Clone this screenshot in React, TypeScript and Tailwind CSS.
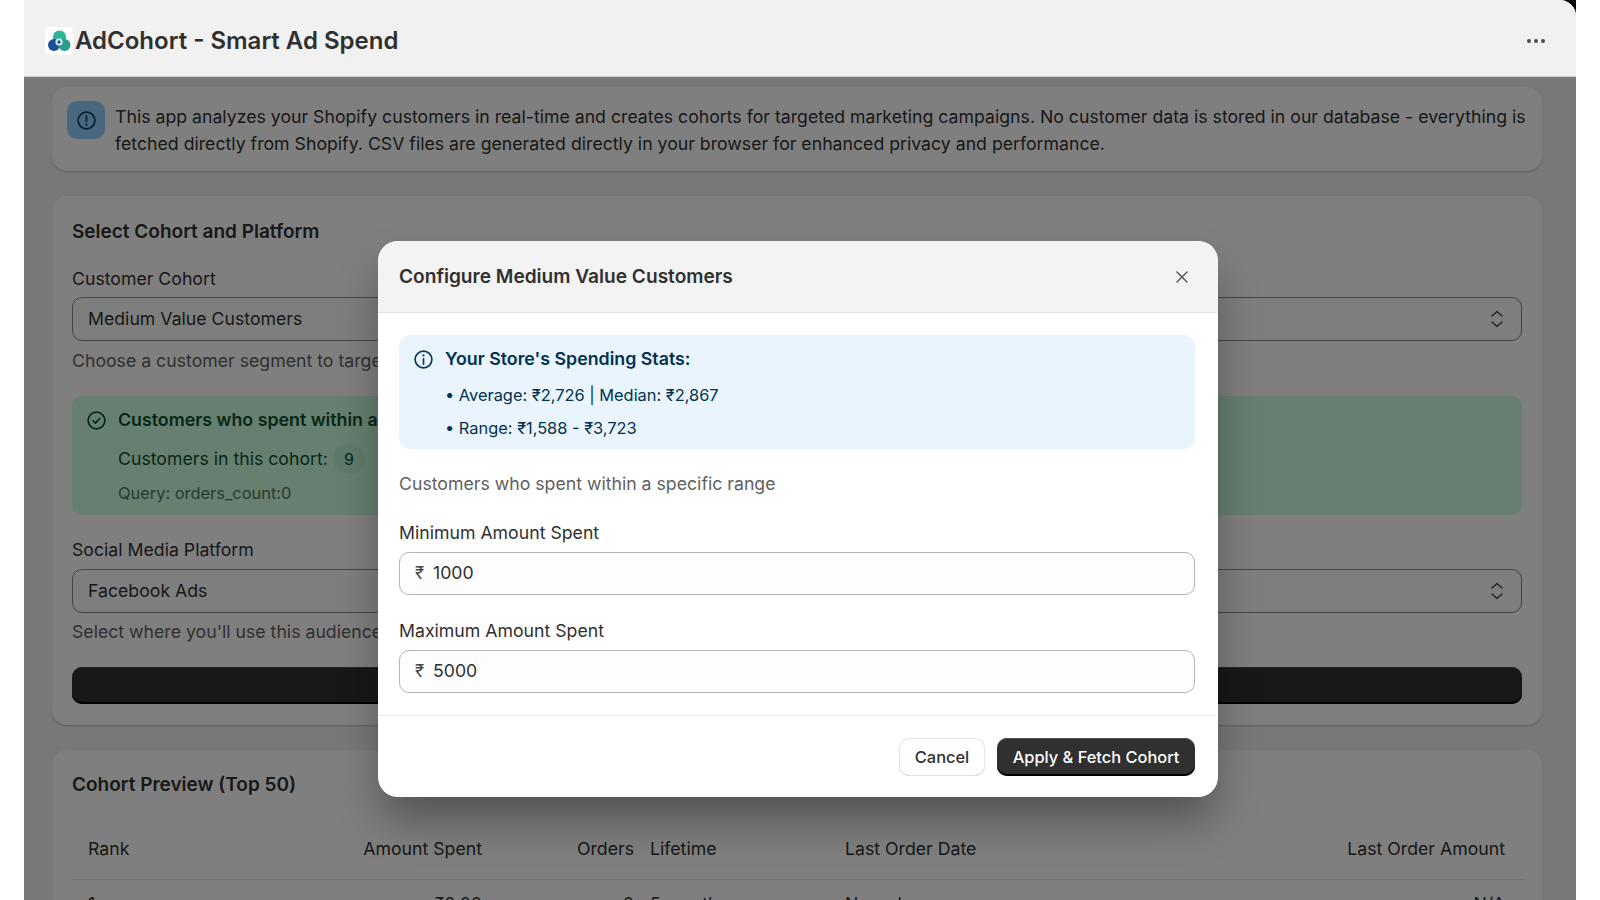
import { X } from 'lucide-react';

const font = "font-['Inter',sans-serif]";

function ChevronSelector() {
  return (
    <svg width="20" height="20" viewBox="0 0 20 20" fill="none" stroke="#4a4a4a" strokeWidth="1.5" strokeLinecap="round" strokeLinejoin="round">
      <path d="M5 7 10 2.5 15 7" />
      <path d="M5 13 10 17.5 15 13" />
    </svg>
  );
}

function InfoCircle({ size = 21, color = '#003a5a', flip = false }: { size?: number; color?: string; flip?: boolean }) {
  return (
    <svg width={size} height={size} viewBox="0 0 20 20" fill="none" stroke={color} strokeWidth="1.6" strokeLinecap="round">
      <circle cx="10" cy="10" r="8" />
      {flip ? (
        <>
          <path d="M10 5.6v5.4" />
          <path d="M10 14v.1" strokeWidth="2" />
        </>
      ) : (
        <>
          <path d="M10 9.4v5" />
          <path d="M10 6v.1" strokeWidth="2" />
        </>
      )}
    </svg>
  );
}

function Logo() {
  return (
    <div className="flex h-[28px] w-[28px] items-center justify-center rounded-[4px] bg-white">
      <svg width="24" height="24" viewBox="0 0 24 24">
        <circle cx="12.5" cy="8" r="6.6" fill="#2fb59a" />
        <circle cx="7" cy="16" r="6" fill="#1d4f9c" />
        <circle cx="17.5" cy="16" r="6" fill="#2a9c8c" />
        <circle cx="12" cy="13" r="3.6" fill="#d9f0f0" />
        <circle cx="12" cy="13" r="1.7" fill="#1d4f9c" />
      </svg>
    </div>
  );
}

function SelectBox({ value }: { value: string }) {
  return (
    <div className="flex h-[44px] items-center justify-between rounded-[10px] border border-[#8a8a8a] bg-[#fdfdfd] pl-[15px] pr-[14px] text-[17.7px] text-[#303030]">
      <span>{value}</span>
      <ChevronSelector />
    </div>
  );
}

function AmountField({ label, value }: { label: string; value: string }) {
  return (
    <div>
      <div className="mb-[7px] text-[17.7px] leading-[24px] text-[#303030]">{label}</div>
      <div className="flex h-[43px] items-center rounded-[10px] border border-[#b5b5b5] bg-[#fdfdfd] pl-[15px] text-[17.7px] text-[#303030]">
        <span className="w-[18px] text-[17px] text-[#4a4a4a]">₹</span>
        <span>{value}</span>
      </div>
    </div>
  );
}

export default function App() {
  return (
    <div className={`h-[900px] w-[1600px] overflow-hidden bg-white ${font}`}>
      <div className="ml-[24px] h-[900px] w-[1552px] overflow-hidden bg-black">
        <div className="relative h-full overflow-hidden rounded-tr-[16px] bg-[#f1f1f1]">
          {/* title bar sits above the backdrop */}
          <div className="relative z-20 flex h-[77px] items-center justify-between border-b border-[#c9c9c9] bg-[#f1f1f1] pl-[21px] pr-[31px] pt-[6px]">
            <div className="flex items-center gap-[2px]">
              <Logo />
              <span className="text-[24px] font-semibold text-[#303030]">AdCohort - Smart Ad Spend</span>
            </div>
            <div className="flex gap-[3px]">
              <span className="h-[4px] w-[4px] rounded-full bg-[#4a4a4a]" />
              <span className="h-[4px] w-[4px] rounded-full bg-[#4a4a4a]" />
              <span className="h-[4px] w-[4px] rounded-full bg-[#4a4a4a]" />
            </div>
          </div>

          {/* page behind the modal */}
          <div className="flex flex-col pl-[27px] pr-[33px] pt-[9px] text-[#303030]">
            <div className="flex gap-[10px] rounded-[16px] bg-white pb-[15px] pl-[16px] pr-[15px] pt-[17px] shadow-[0_1px_0_0_rgba(26,26,26,0.07),inset_0_-1px_0_0_#c8c8c8,inset_0_0_0_1px_rgba(0,0,0,0.08)]">
              <div className="-mt-[2px] flex h-[38px] w-[38px] shrink-0 items-center justify-center rounded-[10px] bg-[#91d0ff]">
                <InfoCircle flip />
              </div>
              <p className="text-[17.7px] leading-[27px]">
                This app analyzes your Shopify customers in real-time and creates cohorts for targeted marketing campaigns. No customer data is stored in our database - everything is fetched directly from Shopify. CSV files are generated directly in your browser for enhanced privacy and performance.
              </p>
            </div>

            <div className="mt-[23px] rounded-[16px] bg-white pb-[22px] pl-[21px] pr-[21px] pt-[23px] shadow-[0_1px_0_0_rgba(26,26,26,0.07),inset_0_-1px_0_0_#c8c8c8,inset_0_0_0_1px_rgba(0,0,0,0.08)]">
              <h2 className="text-[19px] font-semibold leading-[28px]">Select Cohort and Platform</h2>
              <div className="mt-[21px] text-[17.7px] leading-[24px]">Customer Cohort</div>
              <div className="mt-[6px]"><SelectBox value="Medium Value Customers" /></div>
              <div className="mt-[8px] text-[17.7px] leading-[24px] text-[#616161]">Choose a customer segment to target with your marketing campaigns</div>

              <div className="mt-[23px] h-[119px] rounded-[10px] bg-[#cdfee1] pl-[14px] pt-[12px] text-[#0c5132]">
                <div className="flex items-center gap-[11px]">
                  <svg width="21" height="21" viewBox="0 0 20 20" fill="none" stroke="#0c5132" strokeWidth="1.6" strokeLinecap="round" strokeLinejoin="round">
                    <circle cx="10" cy="10" r="8" />
                    <path d="m6.8 10.3 2.2 2.2 4.2-4.6" />
                  </svg>
                  <span className="text-[17.8px] font-semibold leading-[24px]">Customers who spent within a specific range</span>
                </div>
                <div className="mt-[12px] flex items-center pl-[32px] text-[17.7px] leading-[28px]">
                  Customers in this cohort:
                  <span className="ml-[5px] flex h-[30px] w-[32px] items-center justify-center rounded-full bg-[#c0f4d4] text-[16px]">9</span>
                </div>
                <div className="mt-[7px] pl-[32px] text-[16.4px] leading-[24px] text-[#4a7a5e]">Query: orders_count:0</div>
              </div>

              <div className="mt-[23px] text-[17.7px] leading-[24px]">Social Media Platform</div>
              <div className="mt-[7px]"><SelectBox value="Facebook Ads" /></div>
              <div className="mt-[7px] text-[17.7px] leading-[24px] text-[#616161]">Select where you'll use this audience for your ads</div>
              <div className="mt-[23px] h-[37px] rounded-[10px] bg-[#303030] shadow-[inset_0_-2px_0_0_#000,inset_0_1px_0_0_#4a4a4a]" />
            </div>

            <div className="mt-[23px] rounded-[16px] bg-white pl-[21px] pr-[20px] pt-[22px] shadow-[0_1px_0_0_rgba(26,26,26,0.07),inset_0_0_0_1px_rgba(0,0,0,0.08)]">
              <h2 className="text-[19px] font-semibold leading-[28px]">Cohort Preview (Top 50)</h2>
              <div className="mt-[38px] grid grid-cols-[270px_124px_152px_211px_1fr] border-b border-[#e3e3e3] pb-[18px] pl-[16px] pr-[18px] text-[17.7px] leading-[24px]">
                <span>Rank</span>
                <span className="whitespace-nowrap text-right">Amount Spent</span>
                <span className="text-right">Orders</span>
                <span className="pl-[16px]">Lifetime</span>
                <div className="flex justify-between">
                  <span>Last Order Date</span>
                  <span>Last Order Amount</span>
                </div>
              </div>
              <div className="grid grid-cols-[270px_124px_152px_211px_1fr] pl-[16px] pr-[18px] pt-[12px] text-[17.7px] leading-[24px]">
                <span>1</span>
                <span className="text-right">₹0.00</span>
                <span className="text-right">0</span>
                <span className="pl-[16px]">5 months</span>
                <div className="flex justify-between">
                  <span>No orders</span>
                  <span>N/A</span>
                </div>
              </div>
            </div>
          </div>

          {/* backdrop */}
          <div className="absolute inset-0 z-10 bg-black/50" />

          {/* modal */}
          <div className="absolute left-[354px] top-[241px] z-30 w-[840px] overflow-hidden rounded-[20px] bg-white shadow-[0_26px_44px_-4px_rgba(0,0,0,0.35)]">
            <div className="flex h-[72px] items-center justify-between border-b border-[#e3e3e3] bg-[#f3f3f3] pl-[21px] pr-[26px]">
              <h2 className="text-[19.1px] font-semibold text-[#303030]">Configure Medium Value Customers</h2>
              <X size={20} color="#5a5a5a" strokeWidth={1.8} />
            </div>
            <div className="pl-[21px] pr-[23px] pt-[22px]">
              <div className="flex h-[114px] gap-[11px] rounded-[12px] bg-[#eaf4ff] pl-[14px] pt-[12px] text-[#00324f]">
                <div className="pt-[2px]"><InfoCircle /></div>
                <div>
                  <div className="text-[17.8px] font-semibold leading-[24px]">Your Store's Spending Stats:</div>
                  <div className="mt-[12px] text-[16.4px] leading-[24px]">• Average: ₹2,726 | Median: ₹2,867</div>
                  <div className="mt-[9px] text-[16.4px] leading-[24px]">• Range: ₹1,588 - ₹3,723</div>
                </div>
              </div>
              <p className="mt-[23px] text-[17.7px] leading-[24px] text-[#616161]">Customers who spent within a specific range</p>
              <div className="mt-[25px] flex flex-col gap-[24px]">
                <AmountField label="Minimum Amount Spent" value="1000" />
                <AmountField label="Maximum Amount Spent" value="5000" />
              </div>
            </div>
            <div className="mt-[22px] flex justify-end gap-[12px] border-t border-[#e9e9e9] pb-[21px] pl-[21px] pr-[23px] pt-[22px]">
              <button className="h-[38px] w-[86px] rounded-[10px] bg-white text-[16.4px] font-medium text-[#303030] shadow-[inset_0_0_0_1px_#e3e3e3,inset_0_-1px_0_0_#c8c8c8]">Cancel</button>
              <button className="h-[38px] w-[198px] rounded-[10px] bg-[#303030] text-[16.4px] font-medium text-white shadow-[inset_0_-2px_0_0_#000,inset_0_1px_0_0_#555]">Apply &amp; Fetch Cohort</button>
            </div>
          </div>
        </div>
      </div>
    </div>
  );
}
